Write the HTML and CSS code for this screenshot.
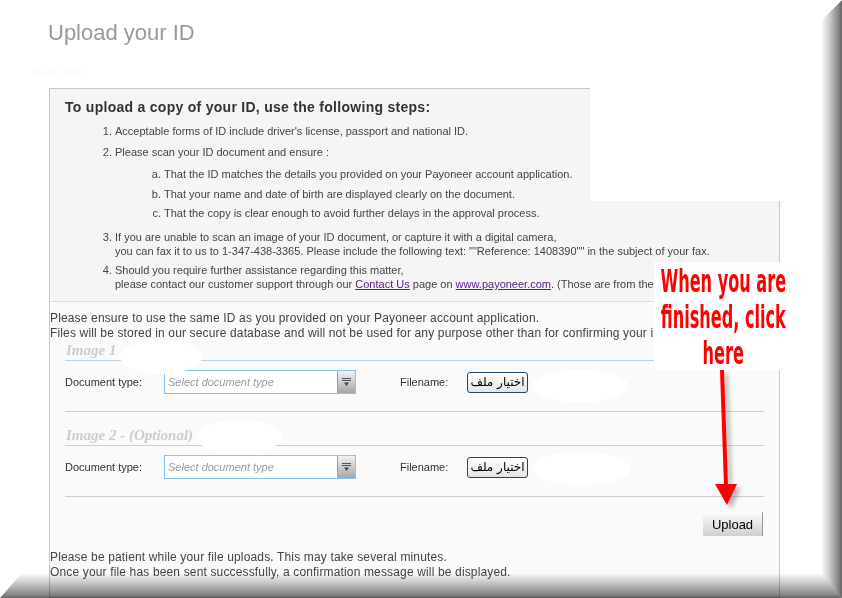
FILE: index.html
```html
<!DOCTYPE html>
<html lang="en">
<head>
  <meta charset="UTF-8">
  <title>Upload your ID</title>
  <link rel="stylesheet" href="styles.css">
</head>
<body>
  <h1 class="title">Upload your ID</h1>
  <p class="greeting">Dear Hadi,</p>

  <!-- Main upload box -->
  <div class="upload-box">
    <div class="steps">
      <h2 class="steps-title">To upload a copy of your ID, use the following steps:</h2>
      <ol class="step-list">
        <li>Acceptable forms of ID include driver's license, passport and national ID.</li>
        <li class="step-scan">Please scan your ID document and ensure :
          <ol class="sub-list">
            <li>That the ID matches the details you provided on your Payoneer account application.</li>
            <li>That your name and date of birth are displayed clearly on the document.</li>
            <li>That the copy is clear enough to avoid further delays in the approval process.</li>
          </ol>
        </li>
        <li class="step-fax">If you are unable to scan an image of your ID document, or capture it with a digital camera,<br>
          you can fax it to us to 1-347-438-3365. Please include the following text: ""Reference: 1408390"" in the subject of your fax.</li>
        <li class="step-help">Should you require further assistance regarding this matter,<br>
          please contact our customer support through our <a href="#">Contact Us</a> page on <a href="#">www.payoneer.com</a>. (Those are from the</li>
      </ol>
    </div>

    <div class="upload-form">
      <p class="note note-top">Please ensure to use the same ID as you provided on your Payoneer account application.<br>
        Files will be stored in our secure database and will not be used for any purpose other than for confirming your i</p>

      <div class="image-block">
        <h3 class="image-title">Image 1</h3>
        <div class="doc-row">
          <span class="doc-label">Document type:</span>
          <div class="doc-select">
            <span class="doc-placeholder">Select document type</span>
            <span class="doc-arrow">
              <svg width="9" height="10" viewBox="0 0 9 10"><path d="M0 1.5h9M0 3.5h9" stroke="#555" stroke-width="1"/><path d="M2 5.5h5l-2.5 3.5z" fill="#444"/></svg>
            </span>
          </div>
          <span class="file-label">Filename:</span>
          <button class="file-btn">اختيار ملف</button>
        </div>
      </div>

      <div class="image-block image-block-second">
        <h3 class="image-title">Image 2 - (Optional)</h3>
        <div class="doc-row">
          <span class="doc-label">Document type:</span>
          <div class="doc-select">
            <span class="doc-placeholder">Select document type</span>
            <span class="doc-arrow">
              <svg width="9" height="10" viewBox="0 0 9 10"><path d="M0 1.5h9M0 3.5h9" stroke="#555" stroke-width="1"/><path d="M2 5.5h5l-2.5 3.5z" fill="#444"/></svg>
            </span>
          </div>
          <span class="file-label">Filename:</span>
          <button class="file-btn">اختيار ملف</button>
        </div>
      </div>

      <div class="actions">
        <button class="upload-btn">Upload</button>
      </div>

      <p class="note note-bottom">Please be patient while your file uploads. This may take several minutes.<br>
        Once your file has been sent successfully, a confirmation message will be displayed.</p>
    </div>
  </div>

  <!-- white retouch patches on the screenshot -->
  <div class="blot blot-top"></div>
  <div class="blot blot-img1"></div>
  <div class="blot blot-img2"></div>
  <div class="blot blot-file1"></div>
  <div class="blot blot-file2"></div>

  <!-- annotation -->
  <div class="callout">
    <p class="callout-text">When you are<br>finished, click<br>here</p>
  </div>
  <svg class="arrow" width="40" height="142" viewBox="0 0 40 142">
    <g class="arrow-shadow">
      <polygon points="14,6 18,6 22,122 18,122"/>
      <polygon points="9,120 31,120 21,141"/>
    </g>
    <g fill="#ff0000">
      <polygon points="10,2 14,2 18,118 14,118"/>
      <polygon points="5,116 27,116 17,137"/>
    </g>
  </svg>

  <!-- picture frame edges -->
  <div class="frame-right"></div>
  <div class="frame-bottom"></div>
</body>
</html>
```

FILE: styles.css
```css
/* General */
body {
  margin: 0;
  width: 842px;
  height: 598px;
  overflow: hidden;
  position: relative;
  background-color: #ffffff;
  font-family: "Liberation Sans", Arial, sans-serif;
  color: #444;
}

.title {
  margin: 20px 0 0 48px;
  font-size: 22px;
  font-weight: normal;
  line-height: 26px;
  color: #999;
}

.greeting {
  margin: 19px 0 0 33px;
  font-size: 11px;
  line-height: 14px;
  color: #f8f8f8;
}

/* Upload box */
.upload-box {
  margin: 9px 0 0 49px;
  width: 731px;
  height: 510px;
  box-sizing: border-box;
  border: 1px solid #c8c8c8;
  background-color: #fafafa;
  overflow: hidden;
}

.steps {
  height: 213px;
  box-sizing: border-box;
  padding: 9px 15px 0;
  background-color: #f5f5f5;
  border-bottom: 1px solid #dcdcdc;
}

.steps-title {
  margin: 0;
  font-size: 14px;
  line-height: 18px;
  font-weight: bold;
  letter-spacing: 0.28px;
  color: #333;
}

.step-list {
  margin: 8px 0 0;
  padding-left: 50px;
  font-size: 11px;
  line-height: 14px;
  white-space: nowrap;
}

.step-list > li + li {
  margin-top: 7px;
}

.step-list > li.step-fax {
  margin-top: 10px;
}

.step-list > li.step-help {
  margin-top: 5px;
}

.sub-list {
  margin: 8px 0 0;
  padding-left: 49px;
  list-style: lower-alpha;
}

.sub-list li + li {
  margin-top: 5.5px;
}

.step-list a {
  color: #551a8b;
}

/* Form */
.upload-form {
  padding-top: 9px;
}

.note {
  margin: 0;
  font-size: 12px;
  line-height: 15px;
  letter-spacing: 0.15px;
  white-space: nowrap;
}

.image-block {
  margin: 0 15px;
}

.image-block-second .image-title {
  margin-top: 14px;
}

.image-title {
  margin: 0;
  height: 19px;
  line-height: 19px;
  padding-left: 1px;
  font-family: "Liberation Serif", "Times New Roman", serif;
  font-style: italic;
  font-weight: bold;
  font-size: 15px;
  color: #cccccc;
  border-bottom: 1px solid #bcd2e6;
}

.doc-row {
  display: flex;
  align-items: center;
  padding: 9px 0 17px;
  border-bottom: 1px solid #cccccc;
  font-size: 11px;
  color: #333;
}

.doc-label {
  width: 99px;
}

.doc-select {
  display: flex;
  width: 192px;
  height: 24px;
  box-sizing: border-box;
  border: 1px solid #8ac4ee;
  background-color: #fff;
}

.doc-placeholder {
  flex: 1;
  padding-left: 3px;
  font-size: 11px;
  line-height: 22px;
  font-style: italic;
  color: #9a9a9a;
}

.doc-arrow {
  width: 17px;
  display: flex;
  align-items: center;
  justify-content: center;
  background: linear-gradient(#f2f2f2, #a6a6a6);
  border-left: 1px solid #a0a0a0;
}

.file-label {
  margin-left: 44px;
  width: 67px;
}

.file-btn {
  width: 61px;
  height: 21px;
  padding: 0;
  border: 1px solid #24456b;
  border-radius: 3px;
  background: linear-gradient(#ffffff, #e4e4e4);
  font-family: "DejaVu Sans", sans-serif;
  font-size: 12px;
  color: #000;
}

.actions {
  display: flex;
  justify-content: flex-end;
  margin: 15px 16px 0;
}

.upload-btn {
  width: 60px;
  height: 24px;
  padding: 0;
  border: none;
  border-right: 1px solid #999;
  background: linear-gradient(#fdfdfd, #cfcfcf);
  font-family: "Liberation Sans", Arial, sans-serif;
  font-size: 13px;
  color: #000;
}

.note-bottom {
  margin-top: 14px;
}

/* Retouch patches */
.blot {
  position: absolute;
  background-color: #ffffff;
  border-radius: 50%;
}

.blot-top {
  left: 590px;
  top: 86px;
  width: 200px;
  height: 115px;
  border-radius: 0 0 6px 0;
}

.blot-img1 {
  left: 120px;
  top: 340px;
  width: 82px;
  height: 34px;
}

.blot-img2 {
  left: 196px;
  top: 420px;
  width: 86px;
  height: 34px;
}

.blot-file1 {
  left: 532px;
  top: 370px;
  width: 96px;
  height: 32px;
}

.blot-file2 {
  left: 532px;
  top: 452px;
  width: 98px;
  height: 33px;
}

/* Annotation */
.callout {
  position: absolute;
  left: 654px;
  top: 262px;
  width: 151px;
  height: 108px;
  background-color: #ffffff;
  display: flex;
  justify-content: center;
  padding-right: 12px;
  box-sizing: border-box;
}

.callout-text {
  margin: 0;
  width: max-content;
  padding-top: 1px;
  font-family: "DejaVu Sans Condensed", "DejaVu Sans", sans-serif;
  font-weight: bold;
  font-size: 32px;
  line-height: 36px;
  color: #ff0000;
  text-align: center;
  white-space: nowrap;
  transform: scaleX(0.56);
  transform-origin: 50% 0;
}

.arrow {
  position: absolute;
  left: 710px;
  top: 368px;
}

.arrow-shadow {
  fill: #666;
  opacity: 0.45;
  filter: blur(2px);
}

/* Frame edges */
.frame-right {
  position: absolute;
  top: 0;
  right: 0;
  width: 21px;
  height: 598px;
  background: linear-gradient(to right, #ffffff, #cccccc 40%, #8a8a8a 80%, #666666);
  clip-path: polygon(0 21px, 100% 0, 100% 100%, 0 calc(100% - 25px));
  mix-blend-mode: multiply;
}

.frame-bottom {
  position: absolute;
  left: 0;
  bottom: 0;
  width: 842px;
  height: 25px;
  background: linear-gradient(#ffffff, #d0d0d0 35%, #8a8a8a 85%, #666666);
  clip-path: polygon(22px 0, calc(100% - 21px) 0, 100% 100%, 0 100%);
  mix-blend-mode: multiply;
}
```
